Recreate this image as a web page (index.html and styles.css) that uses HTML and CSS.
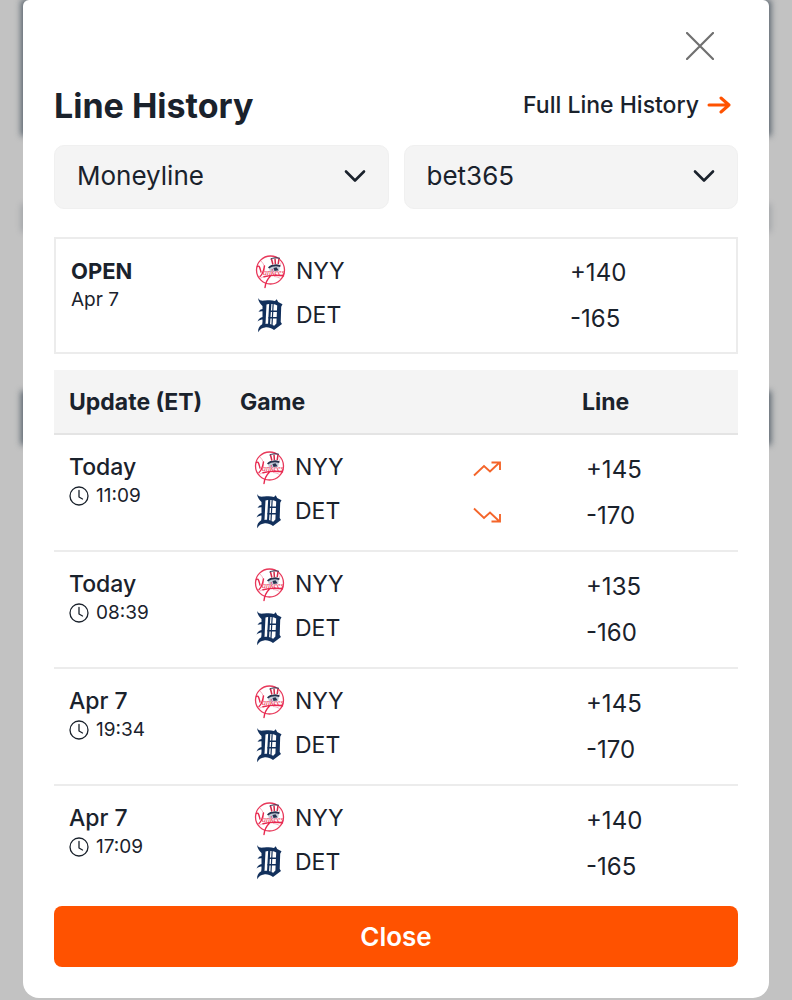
FILE: index.html
```html
<!DOCTYPE html>
<html lang="en">
<head>
    <meta charset="UTF-8">
    <meta name="viewport" content="width=device-width, initial-scale=1.0">
    <title>Line History</title>
    <link rel="stylesheet" href="styles.css">
</head>
<body>
    <!-- Shared icons and team logos -->
    <svg class="sprite" aria-hidden="true">
        <symbol id="logo-nyy" viewBox="0 0 32 35">
            <circle cx="15.500" cy="16" r="14" fill="#fff" stroke="#e8385a" stroke-width="1.300"/>
            <path d="M6 7c3 3 4 6 3.500 10M26.500 8c-1 2-1.500 3-1.600 5M5 24.500c3-1.800 5-2.300 8-2.300M26 25c-2-1.500-4-2.300-7-2.500" fill="none" stroke="#f3a0b2" stroke-width=".8"/>
            <path d="M14 14c2-3 8-4 11-1l-1 4-9 1z" fill="#c5ccd8"/>
            <path d="M13 13.500c3-3.200 8-4.200 12.500-2.200l-.4 1.700c-4-1.500-7.500-1-11 1.500z" fill="#26324d"/>
            <path d="M18.500 14l3-.8 2 3-4 .8z" fill="#26324d"/>
            <path d="M16 5l8.500-.5-.5 6c-2.500-.8-4.500-.6-6 .2z" fill="#fff"/>
            <path d="M16.500 5l1.400 5.500M20 4.600l.4 5.500M24 4.600l-.8 5.500" stroke="#d32848" stroke-width="1.500"/>
            <path d="M15.500 5c3-1.300 6-1.500 9.500-.7" fill="none" stroke="#26324d" stroke-width="1"/>
            <path d="M2.500 12.500c2-1.500 2.500 2 3.500 5.500M9.500 12c-1 5-1.500 8-4.500 10.500M9 22.800c6-1.600 12-2 19.500-1M15.500 22c-2.500 2.500-5 6-5.500 11.500" fill="none" stroke="#e8284f" stroke-width="1.400" stroke-linecap="round"/>
            <text x="8" y="21" class="logo-script">ankees</text>
        </symbol>
        <symbol id="logo-det" viewBox="0 0 28 35">
            <g fill="#12305c">
                <path d="M1 0c1.500 2.800 4 3 7 2.600 4-.7 7-.6 10 .4l1.700-1.800 1.500 2.700 4.300 2.400-1.300 2.400-.5 15.300 1.300 2-8 6c-3-2.300-6-3-9-2.600-3 .2-5 1.800-6.800 4.900-.4-3.500.8-6 4-8l.3-2.500V8C4 6.500 1.500 4 1 0zM9.500 6.500L8.500 26c3-.6 5.500 0 8.700 1.800l2.200-2.300.8-18C17.200 6 14 5.800 9.500 6.500z" fill-rule="evenodd"/>
                <path d="M12.200 5l2.200.3-1.400 22-2-.6zM15.600 5h1.200l-1.200 22h-1.200z"/>
                <path d="M1.500 13.800c1.600-2.500 3-3 5-2.900v2.400c-1.700-.3-3.300-.2-5 .5zM.500 23.500c1.700-3.400 3.500-4.500 6-4.500v2.600c-2.300 0-4 .5-6 1.900z"/>
                <path d="M12.500 12.500h8v1.500h-8zM11.500 19h8.500v1.500h-8.500z"/>
            </g>
        </symbol>
        <symbol id="icon-clock" viewBox="0 0 20 20">
            <g fill="none" stroke="currentColor" stroke-width="1.300" stroke-linecap="round" stroke-linejoin="round">
                <circle cx="10" cy="10" r="9"/>
                <path d="M10 4.500v6.500l3.500 2"/>
            </g>
        </symbol>
        <symbol id="icon-chevron" viewBox="0 0 22 14">
            <path d="M2 2.500l9 9 9-9" fill="none" stroke="currentColor" stroke-width="2.600" stroke-linecap="round" stroke-linejoin="round"/>
        </symbol>
        <symbol id="icon-up" viewBox="0 0 28 16">
            <path d="M1 14.500L11 5l6 5.500L26 2M18.500 1.500h8.500v7.500" fill="none" stroke="currentColor" stroke-width="1.900"/>
        </symbol>
        <symbol id="icon-down" viewBox="0 0 28 16">
            <path d="M1 1.500L11 11l6-5.500L26 14M18.500 14.500h8.500V7" fill="none" stroke="currentColor" stroke-width="1.900"/>
        </symbol>
    </svg>

    <div class="page">
        <!-- Blurred page content behind the modal -->
        <div class="backdrop" aria-hidden="true">
            <div class="block block-top"></div>
            <div class="block block-label"></div>
            <div class="block block-card"></div>
        </div>

        <main class="modal" role="dialog" aria-labelledby="modal-title">
            <div class="modal-top">
                <button type="button" class="dismiss" aria-label="Dismiss">
                    <svg viewBox="0 0 28 28" width="28" height="28"><path d="M1 1l26 26M27 1L1 27" stroke="currentColor" stroke-width="2.200" stroke-linecap="round"/></svg>
                </button>
            </div>

            <div class="modal-header">
                <h1 id="modal-title">Line History</h1>
                <a href="#" class="full-link">
                    Full Line History
                    <svg viewBox="0 0 24 18" width="24" height="18"><path d="M2 9h20M14 2l8 7-8 7" fill="none" stroke="currentColor" stroke-width="3" stroke-linecap="round" stroke-linejoin="round"/></svg>
                </a>
            </div>

            <div class="filters">
                <div class="select-box">
                    <select aria-label="Market">
                        <option>Moneyline</option>
                        <option>Run Line</option>
                        <option>Total</option>
                    </select>
                    <svg class="chevron"><use href="#icon-chevron"/></svg>
                </div>
                <div class="select-box">
                    <select aria-label="Sportsbook">
                        <option>bet365</option>
                    </select>
                    <svg class="chevron"><use href="#icon-chevron"/></svg>
                </div>
            </div>

            <div class="open-box">
                <table class="lines">
                    <tbody>
                        <tr>
                            <td class="col-update"><div class="open-title">OPEN</div><div class="time">Apr 7</div></td>
                            <td class="col-game">
                                <div class="team"><svg class="logo"><use href="#logo-nyy"/></svg>NYY</div>
                                <div class="team"><svg class="logo"><use href="#logo-det"/></svg>DET</div>
                            </td>
                            <td class="col-trend"></td>
                            <td class="col-line"><div>+140</div><div>-165</div></td>
                        </tr>
                    </tbody>
                </table>
            </div>

            <table class="lines updates">
                <thead>
                    <tr>
                        <th class="col-update" scope="col">Update (ET)</th>
                        <th class="col-game" scope="col">Game</th>
                        <td class="col-trend"></td>
                        <th class="col-line" scope="col">Line</th>
                    </tr>
                </thead>
                <tbody>
                    <tr>
                        <td><div class="day">Today</div><div class="time"><svg class="clock"><use href="#icon-clock"/></svg>11:09</div></td>
                        <td class="col-game">
                            <div class="team"><svg class="logo"><use href="#logo-nyy"/></svg>NYY</div>
                            <div class="team"><svg class="logo"><use href="#logo-det"/></svg>DET</div>
                        </td>
                        <td class="col-trend">
                            <div><svg class="trend"><use href="#icon-up"/></svg></div>
                            <div><svg class="trend"><use href="#icon-down"/></svg></div>
                        </td>
                        <td class="col-line"><div>+145</div><div>-170</div></td>
                    </tr>
                    <tr>
                        <td><div class="day">Today</div><div class="time"><svg class="clock"><use href="#icon-clock"/></svg>08:39</div></td>
                        <td class="col-game">
                            <div class="team"><svg class="logo"><use href="#logo-nyy"/></svg>NYY</div>
                            <div class="team"><svg class="logo"><use href="#logo-det"/></svg>DET</div>
                        </td>
                        <td class="col-trend"></td>
                        <td class="col-line"><div>+135</div><div>-160</div></td>
                    </tr>
                    <tr>
                        <td><div class="day">Apr 7</div><div class="time"><svg class="clock"><use href="#icon-clock"/></svg>19:34</div></td>
                        <td class="col-game">
                            <div class="team"><svg class="logo"><use href="#logo-nyy"/></svg>NYY</div>
                            <div class="team"><svg class="logo"><use href="#logo-det"/></svg>DET</div>
                        </td>
                        <td class="col-trend"></td>
                        <td class="col-line"><div>+145</div><div>-170</div></td>
                    </tr>
                    <tr>
                        <td><div class="day">Apr 7</div><div class="time"><svg class="clock"><use href="#icon-clock"/></svg>17:09</div></td>
                        <td class="col-game">
                            <div class="team"><svg class="logo"><use href="#logo-nyy"/></svg>NYY</div>
                            <div class="team"><svg class="logo"><use href="#logo-det"/></svg>DET</div>
                        </td>
                        <td class="col-trend"></td>
                        <td class="col-line"><div>+140</div><div>-165</div></td>
                    </tr>
                </tbody>
            </table>

            <button type="button" class="close-button">Close</button>
        </main>
    </div>
</body>
</html>
```
FILE: styles.css
```css
* {
    box-sizing: border-box;
}
body {
    margin: 0;
    background-color: #c2c2c2;
    color: #1a222c;
    font-family: Inter, sans-serif;
    font-size: 23px;
}
.sprite {
    display: none;
}
.logo-script {
    font-family: "Liberation Serif", serif;
    font-size: 8px;
    font-style: italic;
    fill: #e8284f;
}
.page {
    display: grid;
}
.backdrop,
.modal {
    grid-area: 1 / 1;
}

/* Page content behind the modal */
.backdrop {
    padding: 0 21px;
    overflow: hidden;
}
.block {
    background-color: #56616b;
    filter: blur(3px);
}
.block-top {
    height: 136px;
}
.block-label {
    height: 28px;
    margin-top: 68px;
    opacity: 0.3;
}
.block-card {
    height: 54px;
    margin-top: 159px;
}

.modal {
    position: relative;
    display: flex;
    flex-direction: column;
    margin: 0 23px 2px;
    padding: 24px 31px 31px;
    background-color: #fff;
    border-radius: 6px 6px 16px 16px;
}
.modal-top {
    display: flex;
    justify-content: flex-end;
    padding-right: 16px;
}
.dismiss {
    display: flex;
    padding: 8px;
    border: none;
    background: none;
    color: #707070;
    cursor: pointer;
}
.modal-header {
    display: flex;
    justify-content: space-between;
    align-items: center;
    height: 77px;
    padding: 0 7px 3px 0;
}
h1 {
    margin: 0;
    font-size: 34px;
    font-weight: 700;
}
.full-link {
    display: flex;
    align-items: center;
    gap: 8px;
    color: inherit;
    font-weight: 500;
    text-decoration: none;
}
.full-link svg {
    color: #ff5200;
}

.filters {
    display: grid;
    grid-template-columns: 1fr 1fr;
    gap: 15px;
}
.select-box {
    display: grid;
    align-items: center;
}
.select-box select,
.chevron {
    grid-area: 1 / 1;
}
.select-box select {
    width: 100%;
    height: 64px;
    padding: 0 56px 4px 22px;
    appearance: none;
    border: 1px solid #f0f0f0;
    border-radius: 10px;
    background-color: #f4f4f4;
    color: inherit;
    font-family: inherit;
    font-size: 26px;
    cursor: pointer;
}
.chevron {
    justify-self: end;
    width: 22px;
    height: 14px;
    margin: 0 23px 3px 0;
    pointer-events: none;
}

.open-box {
    margin: 28px 0 16px;
    border: 2px solid #ececec;
}
.lines {
    width: 100%;
    table-layout: fixed;
    border-spacing: 0;
}
.lines td,
.lines th {
    padding: 10px 0 13px 15px;
    text-align: left;
    vertical-align: top;
}
.lines .col-update {
    width: 25%;
}
.lines .col-game {
    width: 34%;
}
.lines .col-trend {
    width: 16%;
}
.lines td.col-game {
    padding-left: 29px;
}
.lines td.col-line {
    padding-left: 19px;
}
.updates tbody td.col-line,
.updates tbody td.col-trend {
    padding-top: 11px;
    padding-bottom: 12px;
}
.open-box .lines td {
    padding-bottom: 11px;
}
.open-box .lines td.col-line {
    padding-left: 4px;
}
.updates th,
.updates thead td {
    height: 65px;
    padding-top: 0;
    padding-bottom: 0;
    background-color: #f4f4f4;
    border-bottom: 2px solid #e4e4e4;
    font-weight: 700;
    vertical-align: middle;
}
.updates tbody td {
    border-bottom: 2px solid #ececec;
}
.updates tbody tr:last-child td {
    border-bottom: none;
}
.col-line div,
.col-trend div {
    display: flex;
    align-items: center;
    height: 46px;
}
.col-line div {
    font-size: 24px;
}
.open-title,
.day {
    padding-top: 8px;
    line-height: 28px;
}
.open-title {
    font-size: 22px;
    font-weight: 700;
}
.day {
    font-weight: 500;
}
.time {
    display: flex;
    align-items: center;
    gap: 7px;
    font-size: 19px;
    line-height: 30px;
}
.clock {
    width: 20px;
    height: 20px;
}
.team {
    display: flex;
    align-items: center;
    gap: 9px;
    height: 44px;
}
.logo {
    width: 32px;
    height: 35px;
}
.trend {
    width: 28px;
    height: 16px;
    color: #f4652a;
}

.close-button {
    height: 61px;
    margin-top: 5px;
    border: none;
    border-radius: 8px;
    background-color: #ff5200;
    color: #fff;
    font-family: inherit;
    font-size: 26px;
    font-weight: 600;
    cursor: pointer;
}
```
